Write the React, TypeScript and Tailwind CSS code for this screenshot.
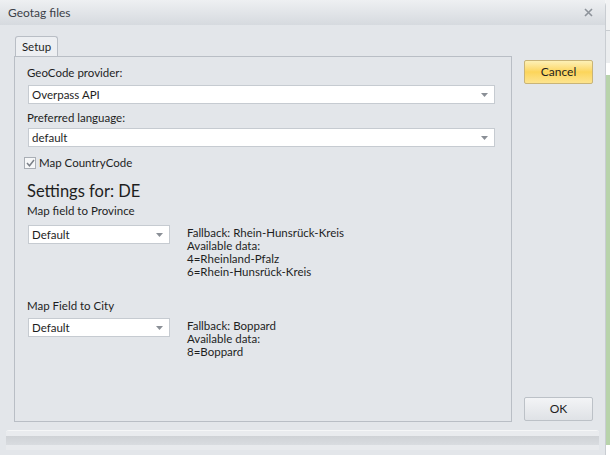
import React from "react"

const font = { fontFamily: 'Lato, "Noto Sans", sans-serif' }

function Combo({ value, className }: { value: string; className: string }) {
  return (
    <div
      className={`flex h-[19px] items-center justify-between border border-[#c6cbd1] bg-white pl-[3px] pr-[6px] text-[11.5px] text-[#1e1e1e] ${className}`}
    >
      <span className="leading-none">{value}</span>
      <svg width="7" height="4" viewBox="0 0 7 4">
        <path d="M0 0h7L3.5 4z" fill="#8a8f96" />
      </svg>
    </div>
  )
}

function Info({ lines }: { lines: string[] }) {
  return (
    <div className="ml-[17px] mt-[1px] text-[11.5px] leading-[13px] text-[#1e1e1e]">
      {lines.map((l) => (
        <div key={l} className="h-[13px]">
          {l}
        </div>
      ))}
    </div>
  )
}

export default function App() {
  return (
    <div className="flex h-[455px] w-[610px] overflow-hidden bg-[#f4f5f6]" style={font}>
      <div className="flex w-[606px] flex-col rounded-tr-[6px] border-r border-[#c9cdd2] bg-[#e3e6ea]">
        {/* title bar */}
        <div className="flex h-[25px] items-center justify-between bg-gradient-to-b from-[#eef0f2] to-[#d6dadf] pl-[8px] pr-[12px]">
          <span className="text-[12px] text-[#3c4148]">Geotag files</span>
          <svg width="9" height="9" viewBox="0 0 9 9">
            <path d="M1 1l7 7M8 1L1 8" stroke="#8d939a" strokeWidth="1.6" />
          </svg>
        </div>

        {/* body */}
        <div className="flex flex-1 pl-[14px] pt-[11px]">
          <div className="flex w-[498px] flex-col">
            <div className="ml-[1px] flex h-[20px] w-[43px] items-center justify-center rounded-t-[3px] border border-b-0 border-[#b9bec5] bg-[#edeff2] text-[11.5px] text-[#1e1e1e]">
              Setup
            </div>
            <div className="flex h-[366px] flex-col border border-[#b9bec5] bg-[#e3e6ea] pl-[12px] pt-[8px] text-[11.5px] text-[#1e1e1e]">
              <div className="h-[16px] leading-[16px]">GeoCode provider:</div>
              <Combo value="Overpass API" className="ml-[1px] mt-[4px] w-[467px]" />
              <div className="mt-[6px] h-[16px] leading-[16px]">Preferred language:</div>
              <Combo value="default" className="ml-[1px] mt-[2px] w-[467px]" />
              <div className="mt-[8px] flex h-[16px] items-center">
                <div className="ml-[-3px] flex h-[12px] w-[12px] items-center justify-center border border-[#a9aeb5] bg-[#f6f7f8]">
                  <svg width="9" height="8" viewBox="0 0 9 8">
                    <path d="M1 4l2.5 2.8L8 1" stroke="#7b8088" strokeWidth="1.5" fill="none" />
                  </svg>
                </div>
                <span className="ml-[3px] leading-[16px]">Map CountryCode</span>
              </div>
              <div className="mt-[10px] h-[20px] text-[16.5px] leading-[20px]">Settings for: DE</div>
              <div className="mt-[2px] h-[16px] leading-[16px]">Map field to Province</div>
              <div className="mt-[6px] flex items-start">
                <Combo value="Default" className="ml-[1px] w-[142px]" />
                <Info lines={["Fallback: Rhein-Hunsrück-Kreis", "Available data:", "4=Rheinland-Pfalz", "6=Rhein-Hunsrück-Kreis"]} />
              </div>
              <div className="mt-[20px] h-[16px] leading-[16px]">Map Field to City</div>
              <div className="mt-[4px] flex items-start">
                <Combo value="Default" className="ml-[1px] w-[142px]" />
                <Info lines={["Fallback: Boppard", "Available data:", "8=Boppard"]} />
              </div>
            </div>
          </div>

          <div className="ml-[12px] flex w-[69px] flex-col justify-between pb-[9px] pt-[24px]">
            <div className="flex h-[24px] items-center justify-center rounded-[2px] border border-[#c9b477] bg-gradient-to-b from-[#fdf0b5] via-[#fcd55a] to-[#fde48e] text-[12px] text-[#1e1e1e]">
              Cancel
            </div>
            <div className="flex h-[24px] items-center justify-center rounded-[2px] border border-[#bcc1c7] bg-gradient-to-b from-[#f3f4f6] to-[#dfe2e6] text-[12px] text-[#1e1e1e]">
              OK
            </div>
          </div>
        </div>

        {/* status bar */}
        <div className="mx-[6px] mb-[5px] flex h-[20px] flex-col overflow-hidden rounded-t-[3px] border-t border-[#f5f6f7]">
          <div className="h-[5px] bg-[#e9ebee]" />
          <div className="h-[9px] bg-gradient-to-b from-[#cfd2d6] to-[#d9dce0]" />
          <div className="flex-1 bg-[#e8eaed]" />
        </div>
      </div>

      {/* sliver of the window behind */}
      <div className="flex w-[4px] flex-col">
        <div className="h-[30px] bg-[#f2f3f4]" />
        <div className="h-[1px] bg-[#c8ccd0]" />
        <div className="h-[32px] bg-[#ebedef]" />
        <div className="h-[12px] bg-white" />
        <div className="flex-1 bg-[#b8d3ab]" />
        <div className="h-[10px] bg-white" />
      </div>
    </div>
  )
}
